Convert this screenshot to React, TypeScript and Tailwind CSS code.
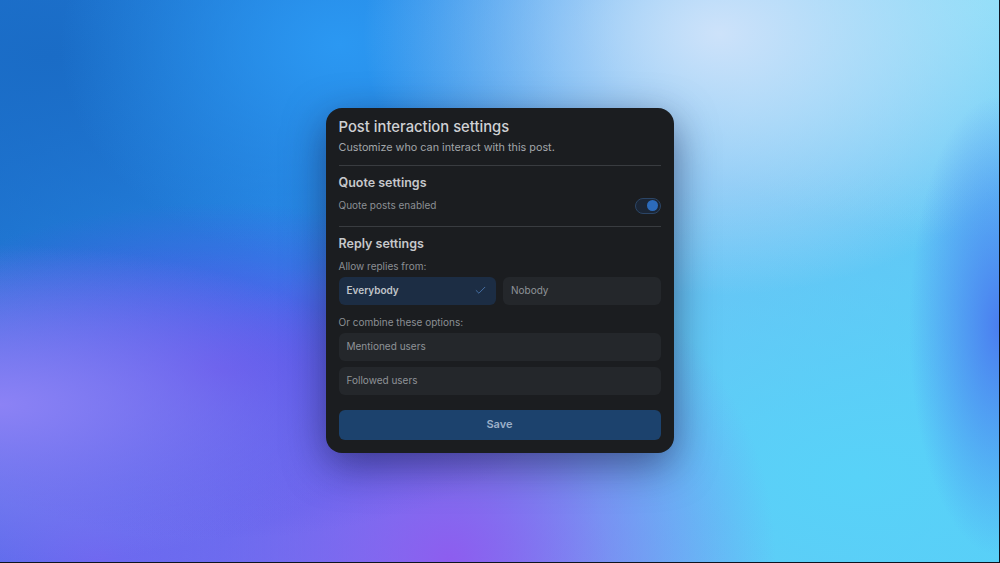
import { Check } from "lucide-react";

const bg =
  "bg-[radial-gradient(ellipse_at_0%_72%,#8c82f5_0%,transparent_28%),radial-gradient(ellipse_at_22%_66%,#5a4fe8_0%,transparent_32%),radial-gradient(ellipse_at_45%_100%,#8d5def_0%,transparent_42%),radial-gradient(ellipse_at_10%_100%,#7068f0_0%,transparent_40%),radial-gradient(ellipse_90px_230px_at_100%_58%,#4a7ef0_0%,transparent_100%),radial-gradient(ellipse_at_72%_6%,#cde2fa_0%,transparent_35%),radial-gradient(ellipse_at_100%_0%,#86def8_0%,transparent_30%),radial-gradient(ellipse_at_86%_85%,#58d2f8_0%,transparent_45%),radial-gradient(ellipse_at_34%_8%,#2b98f2_0%,transparent_30%),radial-gradient(ellipse_at_5%_10%,#1a6cc6_0%,transparent_38%),linear-gradient(110deg,#1f74d0_0%,#2a8cec_35%,#6ec0f4_65%,#58cbf6_100%)]";

function OptionButton({
  label,
  selected,
  full,
}: {
  label: string;
  selected?: boolean;
  full?: boolean;
}) {
  const base = full
    ? "w-full h-[28px] shrink-0 rounded-md px-2 flex items-center justify-between text-[10px]"
    : "flex-1 h-[28px] rounded-md px-2 flex items-center justify-between text-[10px]";
  return (
    <button
      className={
        selected
          ? `${base} bg-[#1c2d44] font-semibold text-[#c0c4c9]`
          : `${base} bg-[#24272b] text-[#8f9398]`
      }
    >
      <span>{label}</span>
      {selected && <Check size={13} strokeWidth={1.5} className="text-[#4d7db8] mr-[1px]" />}
    </button>
  );
}

export default function App() {
  return (
    <div
      className={`relative w-[1000px] h-[563px] overflow-hidden flex items-center justify-center border-r border-b border-[#0d1420] font-['Inter','Liberation_Sans',sans-serif] ${bg}`}
    >
      <div className="w-[348px] mb-[2px] rounded-[16px] bg-[#1b1d20] px-[13px] pt-[9px] pb-[13px] shadow-[0_12px_40px_rgba(20,20,60,0.55)]">
        <h1 className="text-[14.8px] leading-[20px] font-medium text-[#cfd1d4]">
          Post interaction settings
        </h1>
        <p className="mt-[4px] text-[10.8px] leading-[14px] text-[#a2a6aa]">
          Customize who can interact with this post.
        </p>
        <div className="mt-[10px] h-px bg-[#393c40]" />

        <h2 className="mt-[8px] text-[12.5px] leading-[18px] font-semibold text-[#c6c8cb]">
          Quote settings
        </h2>
        <div className="mt-[6px] h-[16px] flex items-center justify-between">
          <span className="text-[10px] text-[#8b8f94]">Quote posts enabled</span>
          <div className="w-[26px] h-[16px] rounded-full bg-[#1b2636] border border-[#2b4566] flex items-center justify-end pr-[2px]">
            <div className="w-[11px] h-[11px] rounded-full bg-[#2c6bbb]" />
          </div>
        </div>
        <div className="mt-[12px] h-px bg-[#393c40]" />

        <h2 className="mt-[8px] text-[12.5px] leading-[18px] font-semibold text-[#c6c8cb]">
          Reply settings
        </h2>
        <p className="mt-[6px] text-[10px] leading-[14px] text-[#8b8f94]">
          Allow replies from:
        </p>
        <div className="mt-[4px] flex gap-[7px]">
          <OptionButton label="Everybody" selected />
          <OptionButton label="Nobody" />
        </div>

        <p className="mt-[10px] text-[10px] leading-[14px] text-[#8b8f94]">
          Or combine these options:
        </p>
        <div className="mt-[4px] flex flex-col gap-[6px]">
          <OptionButton label="Mentioned users" full />
          <OptionButton label="Followed users" full />
        </div>

        <button className="mt-[15px] w-full h-[30px] rounded-md bg-[#1c426d] text-[11px] font-semibold text-[#9db0c9]">
          Save
        </button>
      </div>
    </div>
  );
}
